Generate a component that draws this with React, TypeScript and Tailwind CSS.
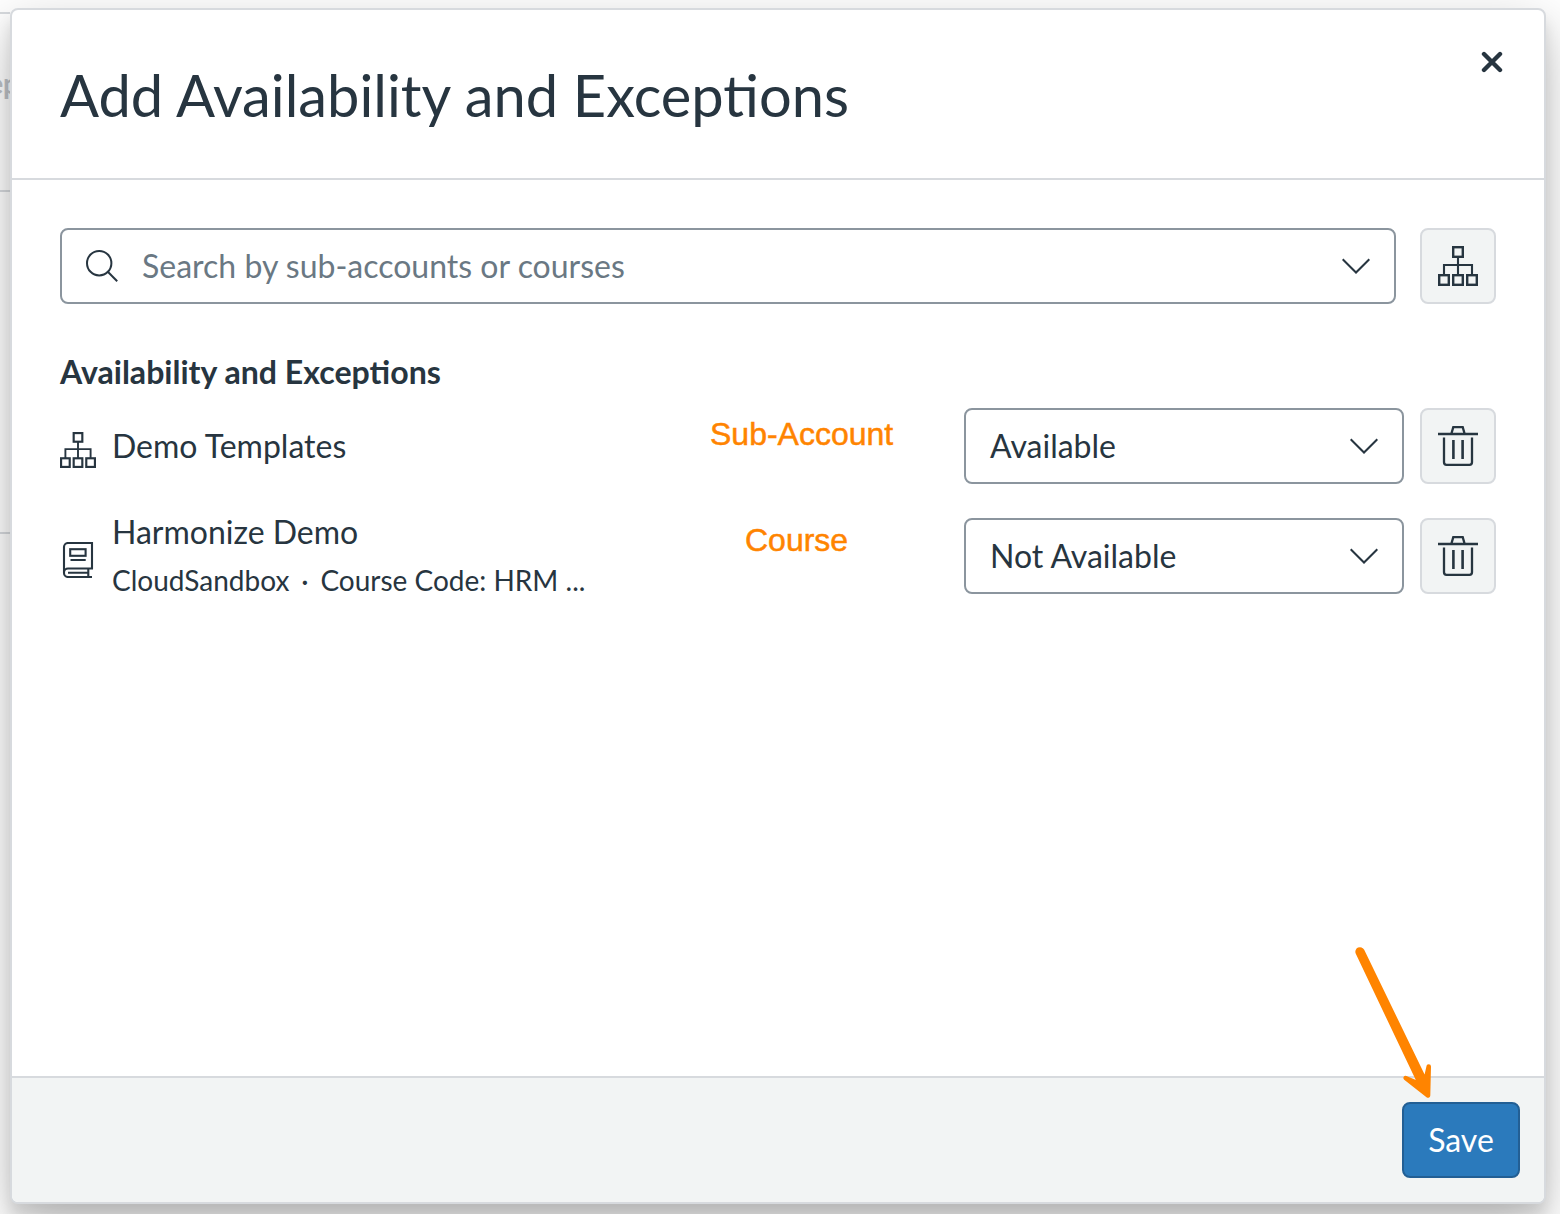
import React from 'react';

type ItemKind = 'account' | 'course';

interface AvailabilityItem {
  id: number;
  kind: ItemKind;
  name: string;
  details?: string[];
  status: string;
}

const items: AvailabilityItem[] = [
  { id: 1, kind: 'account', name: 'Demo Templates', status: 'Available' },
  {
    id: 2,
    kind: 'course',
    name: 'Harmonize Demo',
    details: ['CloudSandbox', 'Course Code: HRM ...'],
    status: 'Not Available',
  },
];

interface IconProps {
  className?: string;
}

const SubAccountIcon: React.FC<IconProps> = ({ className }) => (
  <svg viewBox="0 0 40 40" fill="none" stroke="currentColor" strokeWidth="2.4" className={className}>
    <rect x="15.2" y="1.2" width="9.6" height="9.6" />
    <rect x="1.2" y="29.2" width="9.6" height="9.6" />
    <rect x="15.2" y="29.2" width="9.6" height="9.6" />
    <rect x="29.2" y="29.2" width="9.6" height="9.6" />
    <path d="M20 11v18M6 29V19h28v10" strokeWidth="2.1" />
  </svg>
);

const BookIcon: React.FC<IconProps> = ({ className }) => (
  <svg viewBox="0 0 36 36" fill="none" stroke="currentColor" strokeWidth="2.1" className={className}>
    <path d="M32 35H8A4 4 0 0 1 4 31V5A4 4 0 0 1 8 1H32v25.5H8A4 4 0 0 0 4 30.5" />
    <rect x="10.2" y="7.2" width="15.4" height="6.6" />
    <path d="M10.5 18h15.2M8 30.8h20M28.3 27v8" />
  </svg>
);

const TrashIcon: React.FC<IconProps> = ({ className }) => (
  <svg viewBox="0 0 40 40" fill="none" stroke="currentColor" strokeWidth="2.3" className={className}>
    <path d="M0 8h40M13.3 8l2-6.9h9.4l2 6.9" />
    <path d="M6 11.5V36.300A2.500 2.500 0 0 0 8.500 38.800h23a2.500 2.500 0 0 0 2.500-2.500V11.500" />
    <path d="M15.400 14v19M24.600 14v19" strokeWidth="2.6" />
  </svg>
);

const ChevronIcon: React.FC<IconProps> = ({ className }) => (
  <svg viewBox="0 0 28 16" fill="none" stroke="currentColor" strokeWidth="2" className={className}>
    <path d="M.7 1.2 14 14.5 27.3 1.2" />
  </svg>
);

const SearchIcon: React.FC<IconProps> = ({ className }) => (
  <svg viewBox="0 0 32 32" fill="none" stroke="currentColor" strokeWidth="2" className={className}>
    <circle cx="13.2" cy="13.2" r="12.200" />
    <path d="m21.800 21.800 9.400 9.400" />
  </svg>
);

const CloseIcon: React.FC<IconProps> = ({ className }) => (
  <svg
    viewBox="0 0 22 22"
    fill="none"
    stroke="currentColor"
    strokeWidth="4.4"
    strokeLinecap="round"
    className={className}
  >
    <path d="M3 3l16 16M19 3L3 19" />
  </svg>
);

const IconButton: React.FC<{ label: string; children: React.ReactNode }> = ({ label, children }) => (
  <button
    aria-label={label}
    className="flex size-[76px] shrink-0 items-center justify-center rounded-lg border-2 border-[#d7dade] bg-[#f2f4f4]"
  >
    {children}
  </button>
);

const ItemRow: React.FC<{ item: AvailabilityItem }> = ({ item }) => (
  <div className="flex h-[76px] items-center">
    {item.kind === 'account' ? (
      <SubAccountIcon className="mt-2 size-9 shrink-0" />
    ) : (
      <BookIcon className="mt-2 size-9 shrink-0" />
    )}
    <div className="ml-4 flex-1 whitespace-nowrap">
      <div className="text-[32px] leading-[48px]">{item.name}</div>
      {item.details && (
        <div className="flex text-[28px] leading-[48px]">
          <span>{item.details[0]}</span>
          <span className="w-[31px] text-center">·</span>
          <span>{item.details[1]}</span>
        </div>
      )}
    </div>
    <button className="flex h-[76px] w-[440px] items-center justify-between rounded-lg border-2 border-[#8b959e] bg-white px-6 text-[32px]">
      <span>{item.status}</span>
      <ChevronIcon className="h-4 w-7" />
    </button>
    <div className="ml-4">
      <IconButton label={`Remove ${item.name}`}>
        <TrashIcon className="size-10" />
      </IconButton>
    </div>
  </div>
);

// Dimmed page that shows past the left edge of the dialog
const PageBehind: React.FC = () => (
  <div className="absolute inset-y-0 left-0 w-[10px] overflow-hidden">
    <div className="mt-3 h-[180px] border-y-2 border-[#d7dade]">
      <div className="mt-[48px] flex justify-end text-[28px] font-bold text-[#bfc3c7]">
        <span className="-mr-[9px]">ep</span>
      </div>
    </div>
    <div className="h-[342px] border-b-2 border-[#d7dade]" />
  </div>
);

const Annotations: React.FC = () => (
  <div className="pointer-events-none absolute inset-0 font-['Liberation_Sans',sans-serif] text-[32px] leading-10 text-[#ff8400]">
    <span className="absolute left-[710px] top-[414px] [-webkit-text-stroke:0.5px_#ff8400]">Sub-Account</span>
    <span className="absolute left-[745px] top-[520px] [-webkit-text-stroke:0.5px_#ff8400]">Course</span>
    <svg viewBox="0 0 82 156" className="absolute left-[1352px] top-[945px] h-[156px] w-[82px]" fill="#ff8400">
      <path d="M3.8 8.8A4.5 4.5 0 0 1 12.2 4.8L72.6 129.500 74.400 121.500A2.300 2.300 0 0 1 79 121.500L78.300 150.500A2.300 2.300 0 0 1 74.800 152.500L52.200 134.700A2.200 2.200 0 0 1 54.500 131L63.800 135Z" />
    </svg>
  </div>
);

const App: React.FC = () => {
  return (
    <div className="relative h-[1214px] w-[1560px] overflow-hidden bg-white pl-[10px] pt-2 font-['Lato',sans-serif] text-[#273540]">
      <PageBehind />
      <div
        role="dialog"
        className="relative flex h-[1196px] w-[1536px] flex-col overflow-hidden rounded-lg border-2 border-[#d7dade] bg-white shadow-[0_12px_14px_rgba(0,0,0,0.1),0_20px_56px_rgba(0,0,0,0.25)]"
      >
        <header className="flex h-[170px] shrink-0 items-start justify-between border-b-2 border-[#d7dade] pl-12 pr-10 pt-[41px]">
          <h1 className="text-[57.8px] leading-[87px]">Add Availability and Exceptions</h1>
          <button aria-label="Close" className="mr-px">
            <CloseIcon className="size-[22px]" />
          </button>
        </header>

        <main className="flex-1 p-12">
          <div className="flex gap-6">
            <div className="flex h-[76px] flex-1 items-center rounded-lg border-2 border-[#8b959e] px-6">
              <SearchIcon className="size-8" />
              <span className="ml-6 flex-1 text-[32px] text-[#6a7883]">Search by sub-accounts or courses</span>
              <ChevronIcon className="h-4 w-7" />
            </div>
            <IconButton label="Browse sub-accounts">
              <SubAccountIcon className="size-10" />
            </IconButton>
          </div>

          <h2 className="mt-12 text-[32.1px] font-bold leading-[40px]">Availability and Exceptions</h2>
          <div className="mt-4 flex flex-col gap-[34px]">
            {items.map((item) => (
              <ItemRow key={item.id} item={item} />
            ))}
          </div>
        </main>

        <footer className="flex h-[126px] shrink-0 items-center justify-end border-t-2 border-[#d7dade] bg-[#f2f4f4] pr-6">
          <button className="h-[76px] w-[118px] rounded-lg border-2 border-[#235f94] bg-[#2b7abc] text-[32px] text-white">
            Save
          </button>
        </footer>
      </div>
      <Annotations />
    </div>
  );
};

export default App;
